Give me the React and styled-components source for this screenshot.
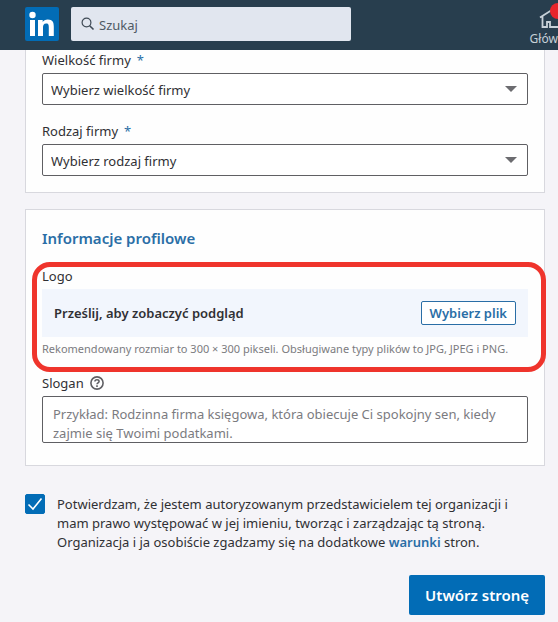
import React, { useState } from "react";
import styled, { ThemeProvider, createGlobalStyle } from "styled-components";

const theme = {
  header: "#283e4e",
  page: "#f5f4f8",
  card: "#fefefe",
  cardBorder: "#d8d8de",
  field: "#5f5f63",
  text: "#303034",
  muted: "#7b7b7f",
  blue: "#026cb6",
  link: "#2a6ea6",
  highlight: "#ef342c"
};

const App = () => {
  const [accepted, setAccepted] = useState(true);

  return (
    <ThemeProvider theme={theme}>
      <GlobalStyle />
      <Header>
        <LogoLink href="#" aria-label="LinkedIn">
          <LinkedInLogo />
        </LogoLink>
        <Search>
          <SearchIcon />
          <SearchInput type="search" placeholder="Szukaj" aria-label="Szukaj" />
        </Search>
        <NavLink href="#">
          <HomeIcon />
          <Badge />
          Główna
        </NavLink>
      </Header>
      <Main>
        <Card>
          <SelectField
            id="size"
            label="Wielkość firmy"
            placeholder="Wybierz wielkość firmy"
          />
          <SelectField
            id="type"
            label="Rodzaj firmy"
            placeholder="Wybierz rodzaj firmy"
          />
        </Card>
        <Card $titled>
          <Title>Informacje profilowe</Title>
          <LogoField>
            <Label as="div">Logo</Label>
            <Upload>
              <UploadText>Prześlij, aby zobaczyć podgląd</UploadText>
              <FileButton type="button">Wybierz plik</FileButton>
            </Upload>
            <Note>
              Rekomendowany rozmiar to 300 × 300 pikseli. Obsługiwane typy
              plików to JPG, JPEG i PNG.
            </Note>
            <Highlight />
          </LogoField>
          <Label htmlFor="tagline">
            Slogan
            <HelpIcon />
          </Label>
          <TextArea
            id="tagline"
            placeholder="Przykład: Rodzinna firma księgowa, która obiecuje Ci spokojny sen, kiedy zajmie się Twoimi podatkami."
          />
        </Card>
        <Consent>
          <CheckWrapper>
            <Checkbox
              id="consent"
              type="checkbox"
              checked={accepted}
              onChange={event => setAccepted(event.target.checked)}
            />
            {accepted && <CheckIcon />}
          </CheckWrapper>
          <ConsentText htmlFor="consent">
            Potwierdzam, że jestem autoryzowanym przedstawicielem tej
            organizacji i mam prawo występować w jej imieniu, tworząc i
            zarządzając tą stroną. Organizacja i ja osobiście zgadzamy się na
            dodatkowe <TermsLink href="#">warunki</TermsLink> stron.
          </ConsentText>
        </Consent>
        <SubmitButton type="submit">Utwórz stronę</SubmitButton>
      </Main>
    </ThemeProvider>
  );
};

const SelectField = ({ id, label, placeholder }) => (
  <Field>
    <Label htmlFor={id}>
      {label}
      <Required>*</Required>
    </Label>
    <SelectWrapper>
      <Select id={id} required defaultValue="">
        <option value="">{placeholder}</option>
      </Select>
      <Caret />
    </SelectWrapper>
  </Field>
);

const LinkedInLogo = () => (
  <svg width="34" height="34" viewBox="0 0 34 34">
    <rect width="34" height="34" rx="2" fill="#026cb6" />
    <g fill="#fff">
      <circle cx="7.500" cy="8" r="3.200" />
      <path d="M5 13h5v16H5z" />
      <path d="M13 13h4.700v2c.8-1.500 2.600-2.500 5.100-2.500 5 0 6 3 6 7.200V29h-5v-8.300c0-2 0-4.200-2.600-4.200S18 18.400 18 20.600V29h-5z" />
    </g>
  </svg>
);

const SearchIcon = () => (
  <svg width="14" height="14" viewBox="0 0 14 14" fill="none" stroke="#3f4a55">
    <circle cx="5.500" cy="5.500" r="4.400" strokeWidth="1.200" />
    <path d="M8.700 8.700L12.500 12.500" strokeWidth="1.600" />
  </svg>
);

const HomeIcon = () => (
  <svg width="24" height="20" viewBox="0 0 24 20" fill="none">
    <path
      d="M1 8.500L12 1.500 23 8.500M3.500 7.500V18H8v-5h3v5h9V7"
      stroke="#c7d1d8"
      strokeWidth="1.800"
    />
  </svg>
);

const HelpIcon = () => (
  <svg width="14" height="14" viewBox="0 0 14 14" fill="none" stroke="#5f5f63">
    <circle cx="7" cy="7" r="6.100" strokeWidth="1.600" />
    <path
      d="M4.900 5.600c0-1.200.9-1.900 2.100-1.900s2.100.7 2.100 1.700c0 1.400-2.100 1.500-2.100 2.900"
      strokeWidth="1.500"
    />
    <path d="M7 9.300v1.600" strokeWidth="1.600" />
  </svg>
);

const GlobalStyle = createGlobalStyle`
  * {
    box-sizing: border-box;
  }
  body {
    margin: 0;
    background: ${theme.page};
    color: ${theme.text};
    overflow-x: hidden;
  }
  body, button, input, select, textarea {
    font-family: "Noto Sans", "Open Sans", sans-serif;
    font-size: 13px;
    line-height: 19px;
  }
`;

const Header = styled.header`
  display: flex;
  align-items: center;
  gap: 12px;
  height: 50px;
  padding-left: 25px;
  overflow: hidden;
  background: ${props => props.theme.header};
`;

const LogoLink = styled.a`
  display: flex;
  margin-bottom: 2px;
`;

const Search = styled.div`
  display: flex;
  align-items: center;
  gap: 4px;
  flex: 0 1 280px;
  height: 34px;
  margin-bottom: 2px;
  padding: 0 10px;
  border-radius: 2px;
  background: #e1e6ef;
`;

const SearchInput = styled.input`
  flex: 1;
  min-width: 0;
  padding: 2px 0 0;
  border: 0;
  outline: none;
  background: transparent;
  &::placeholder {
    color: #4f5a64;
    opacity: 1;
  }
`;

const NavLink = styled.a`
  position: relative;
  display: flex;
  flex-direction: column;
  align-items: center;
  flex: none;
  margin-left: auto;
  margin-right: -14px;
  padding-top: 8px;
  color: #c7d1d8;
  font-size: 12px;
  line-height: 20px;
  text-decoration: none;
`;

const Badge = styled.span`
  position: absolute;
  top: 2px;
  right: 6px;
  width: 16px;
  height: 16px;
  border-radius: 8px;
  background: #e8242b;
`;

const Main = styled.main`
  display: flex;
  flex-direction: column;
  padding: 0 13px 8px 25px;
`;

const Card = styled.section`
  display: flex;
  flex-direction: column;
  padding: ${props => (props.$titled ? "18px 16px 22px" : "0 16px 16px")};
  border: 1px solid ${props => props.theme.cardBorder};
  border-top-width: ${props => (props.$titled ? "1px" : "0")};
  background: ${props => props.theme.card};
  & + & {
    margin-top: 16px;
  }
`;

const Field = styled.div`
  & + & {
    margin-top: 16px;
  }
`;

const Label = styled.label`
  display: flex;
  align-items: center;
  gap: 6px;
  margin-bottom: 3px;
  line-height: 20px;
`;

const Required = styled.span`
  color: ${props => props.theme.link};
`;

const SelectWrapper = styled.div`
  position: relative;
`;

const Select = styled.select`
  display: block;
  width: 100%;
  height: 32px;
  padding: 2px 32px 0 8px;
  appearance: none;
  border: 1px solid ${props => props.theme.field};
  border-radius: 2px;
  background: #fff;
  color: ${props => props.theme.text};
`;

const Caret = styled.span`
  position: absolute;
  top: 13px;
  right: 11px;
  border: 6px solid transparent;
  border-top-color: #6c6c70;
  border-bottom: 0;
  pointer-events: none;
`;

const Title = styled.h2`
  margin: 0 0 18px;
  color: ${props => props.theme.link};
  font-size: 15px;
  font-weight: 600;
  line-height: 20px;
`;

const LogoField = styled.div`
  position: relative;
  margin-bottom: 14px;
`;

const Upload = styled.div`
  display: flex;
  align-items: center;
  justify-content: space-between;
  height: 48px;
  padding: 0 12px;
  background: #f2f6fd;
`;

const UploadText = styled.span`
  font-weight: 600;
`;

const FileButton = styled.button`
  height: 24px;
  padding: 0 8px;
  border: 1px solid ${props => props.theme.link};
  border-radius: 2px;
  background: #fff;
  color: ${props => props.theme.link};
  font-weight: 600;
  cursor: pointer;
`;

const Note = styled.p`
  margin: 2px 0 0;
  color: ${props => props.theme.muted};
  font-size: 11px;
  line-height: 20px;
`;

// marker drawn around the logo upload
const Highlight = styled.span`
  position: absolute;
  inset: -4px -18px -13px -10px;
  border: 5px solid ${props => props.theme.highlight};
  border-radius: 18px;
  pointer-events: none;
`;

const TextArea = styled.textarea`
  display: block;
  width: 100%;
  height: 47px;
  padding: 8px 10px 0;
  border: 1px solid ${props => props.theme.field};
  border-radius: 2px;
  background: #fff;
  resize: none;
  overflow: hidden;
  &::placeholder {
    color: ${props => props.theme.muted};
    opacity: 1;
  }
`;

const Consent = styled.div`
  display: flex;
  gap: 12px;
  margin-top: 28px;
`;

const CheckWrapper = styled.span`
  position: relative;
  flex: none;
  width: 20px;
  height: 20px;
`;

const Checkbox = styled.input`
  display: block;
  width: 20px;
  height: 20px;
  margin: 0;
  appearance: none;
  border: 1px solid ${props => props.theme.blue};
  border-radius: 2px;
  &:checked {
    background: ${props => props.theme.blue};
  }
`;

const CheckIcon = styled(({ className }) => (
  <svg className={className} width="20" height="20" viewBox="0 0 20 20">
    <path
      d="M3.500 10.500L8 15 16.500 4.500"
      fill="none"
      stroke="#fff"
      strokeWidth="1.600"
    />
  </svg>
))`
  position: absolute;
  top: 0;
  left: 0;
  pointer-events: none;
`;

const ConsentText = styled.label`
  max-width: 464px;
  padding-top: 1px;
`;

const TermsLink = styled.a`
  color: ${props => props.theme.link};
  font-weight: 600;
  text-decoration: none;
`;

const SubmitButton = styled.button`
  align-self: flex-end;
  height: 40px;
  margin-top: 23px;
  padding: 0 16px;
  border: 0;
  border-radius: 2px;
  background: ${props => props.theme.blue};
  color: #fff;
  font-size: 15px;
  font-weight: 600;
  cursor: pointer;
`;

export default App;
